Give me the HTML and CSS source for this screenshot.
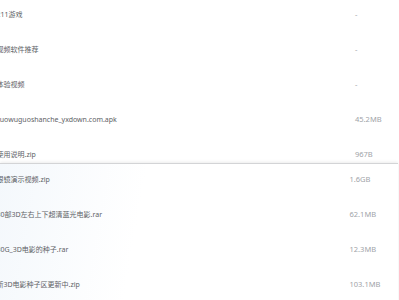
FILE: index.html
```html
<!DOCTYPE html>
<html lang="zh-CN">
<head>
<meta charset="utf-8">
<link rel="stylesheet" href="styles.css">
</head>
<body>
<div class="viewport">
  <div class="upper">
    <div class="list list-upper">
      <div class="row"><span class="name">211游戏</span><span class="size">-</span></div>
      <div class="row"><span class="name">视频软件推荐</span><span class="size">-</span></div>
      <div class="row"><span class="name">体验视频</span><span class="size">-</span></div>
      <div class="row"><span class="name">zuowuguoshanche_yxdown.com.apk</span><span class="size">45.2MB</span></div>
      <div class="row"><span class="name">使用说明.zip</span><span class="size">967B</span></div>
    </div>
  </div>
  <div class="panel">
    <div class="list list-lower">
      <div class="row"><span class="name">跟镜演示视频.zip</span><span class="size">1.6GB</span></div>
      <div class="row"><span class="name">30部3D左右上下超清蓝光电影.rar</span><span class="size">62.1MB</span></div>
      <div class="row"><span class="name">30G_3D电影的种子.rar</span><span class="size">12.3MB</span></div>
      <div class="row"><span class="name">新3D电影种子区更新中.zip</span><span class="size">103.1MB</span></div>
    </div>
  </div>
</div>
</body>
</html>
```
FILE: styles.css
```css
html, body {
  margin: 0;
  padding: 0;
  background: #ffffff;
}
body {
  font-family: "Noto Sans", "Noto Sans CJK SC", sans-serif;
  font-size: 7px;
  color: #606266;
}
.viewport {
  width: 399px;
  height: 300px;
  overflow: hidden;
  display: flex;
  flex-direction: column;
}
.upper {
  height: 163px;
  overflow: hidden;
  flex: none;
}
.list {
  display: flex;
  flex-direction: column;
  margin-left: -3.5px;
}
.list-upper {
  margin-top: -3.5px;
}
.row {
  height: 35px;
  display: grid;
  align-items: center;
  white-space: nowrap;
}
.list-upper .row {
  grid-template-columns: 358.5px 1fr;
}
.list-lower .row {
  grid-template-columns: 353px 1fr;
}
.size {
  color: #a0a3a8;
  font-size: 7.5px;
}
.panel {
  flex: 1;
  width: 398px;
  border-top: 1px solid #d3d4d6;
  box-shadow: 0 -1px 3px rgba(0, 0, 0, 0.08);
  background: linear-gradient(100deg, #f4f8fc 0%, #ffffff 35%);
  position: relative;
}
.list-lower {
  margin-top: -2.5px;
}
```
